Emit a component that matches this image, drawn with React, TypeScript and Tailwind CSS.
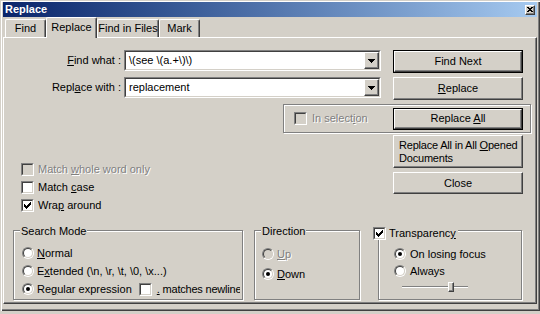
import React from "react";

const raised =
  "border border-t-white border-l-white border-r-[#404040] border-b-[#404040] shadow-[inset_-1px_-1px_0_#808080] bg-[#d4d0c8]";

function Btn({ children, def, className, left }: { children: React.ReactNode; def?: boolean; className: string; left?: boolean }) {
  const inner = (
    <div className={`h-full w-full flex items-center ${left ? "justify-start pl-[5px]" : "justify-center"} ${raised}`}>
      {children}
    </div>
  );
  return <div className={`${def ? "border border-black" : ""} ${className}`}>{inner}</div>;
}

function Combo({ value }: { value: string }) {
  return (
    <div className="w-[257px] h-[21px] flex border border-t-[#808080] border-l-[#808080] border-r-white border-b-white">
      <div className="flex-1 flex border border-t-[#404040] border-l-[#404040] border-r-[#d4d0c8] border-b-[#d4d0c8] bg-white">
        <div className="flex-1 pl-[3px] flex items-center">{value}</div>
        <div className={`w-[15px] h-full flex items-center justify-center ${raised}`}>
          <svg width="7" height="4" viewBox="0 0 7 4" shapeRendering="crispEdges">
            <path d="M0 0H7L3.5 4Z" fill="black" />
          </svg>
        </div>
      </div>
    </div>
  );
}

function Check({ checked, disabled }: { checked?: boolean; disabled?: boolean }) {
  return (
    <div className="w-[13px] h-[13px] shrink-0 border border-t-[#808080] border-l-[#808080] border-r-white border-b-white">
      <div
        className={`w-full h-full flex items-center justify-center border border-t-[#404040] border-l-[#404040] border-r-[#d4d0c8] border-b-[#d4d0c8] ${
          disabled ? "bg-[#d4d0c8]" : "bg-white"
        }`}
      >
        {checked && (
          <svg width="7" height="7" viewBox="0 0 7 7" shapeRendering="crispEdges">
            <path d="M0 2L2 4L7 -1V2L2 7L0 5Z" fill="black" />
          </svg>
        )}
      </div>
    </div>
  );
}

function Radio({ on, disabled }: { on?: boolean; disabled?: boolean }) {
  return (
    <div className="w-[12px] h-[12px] shrink-0 rounded-full border border-t-[#808080] border-l-[#808080] border-r-white border-b-white">
      <div
        className={`w-full h-full rounded-full flex items-center justify-center border border-t-[#404040] border-l-[#404040] border-r-[#d4d0c8] border-b-[#d4d0c8] ${
          disabled ? "bg-[#d4d0c8]" : "bg-white"
        }`}
      >
        {on && <div className="w-[4px] h-[4px] rounded-full bg-black" />}
      </div>
    </div>
  );
}

const U = ({ children }: { children: React.ReactNode }) => <span className="underline underline-offset-[1px]">{children}</span>;
const dis = "text-[#808080] [text-shadow:1px_1px_0_#fff]";
const etched = "relative border border-[#808080] shadow-[1px_1px_0_#fff,inset_1px_1px_0_#fff]";

function Tab({ label, w, active }: { label: string; w: string; active?: boolean }) {
  return (
    <div
      className={`${w} flex items-center justify-center rounded-t-[2px] bg-[#d4d0c8] border-t border-l border-r border-t-white border-l-white border-r-[#404040] shadow-[inset_-1px_0_0_#808080] ${
        active ? "h-[21px] -mb-[1px] relative z-10 pb-[2px]" : "h-[18px]"
      }`}
    >
      {label}
    </div>
  );
}

export default function App() {
  return (
    <div className="w-[540px] h-[314px] bg-[#d4d0c8] font-['Liberation_Sans',Arial,sans-serif] text-[11px] leading-[13px] text-black overflow-hidden">
      <div className="h-[311px] flex flex-col px-[3px] pt-[2px] shadow-[inset_1px_1px_0_#d4d0c8,inset_2px_2px_0_#fff,inset_-1px_-1px_0_#404040,inset_-2px_-2px_0_#808080]">
        {/* title bar */}
        <div className="h-[15px] flex items-center justify-between pl-[2px] pr-[2px] bg-linear-to-r from-[#0a246a] to-[#a6caf0]">
          <span className="font-bold text-white">Replace</span>
          <div className={`w-[10px] h-[10px] flex items-center justify-center ${raised}`}>
            <svg width="6" height="5" viewBox="0 0 6 5" shapeRendering="crispEdges">
              <path d="M0 0L6 5M6 0L0 5" stroke="black" strokeWidth="1.3" />
            </svg>
          </div>
        </div>

        {/* tabs */}
        <div className="h-[20px] flex items-end pl-[2px]">
          <Tab label="Find" w="w-[41px]" />
          <Tab label="Replace" w="w-[51px]" active />
          <Tab label="Find in Files" w="w-[62px]" />
          <Tab label="Mark" w="w-[41px]" />
        </div>

        {/* panel */}
        <div className="h-[267px] flex flex-col border border-t-white border-l-white border-r-[#404040] border-b-[#404040] shadow-[inset_-1px_-1px_0_#808080]">
          <div className="mt-[12px] flex items-start">
            <div className="w-[117px] h-[21px] flex items-center justify-end">
              <span>
                <U>F</U>ind what :
              </span>
            </div>
            <div className="ml-[3px]">
              <Combo value="\(see \(a.+\)\)" />
            </div>
            <Btn def className="ml-[12px] w-[130px] h-[23px]">
              Find Next
            </Btn>
          </div>

          <div className="mt-[4px] flex items-start">
            <div className="w-[117px] h-[21px] flex items-center justify-end">
              <span>
                Repl<U>a</U>ce with :
              </span>
            </div>
            <div className="ml-[3px]">
              <Combo value="replacement" />
            </div>
            <Btn className="ml-[12px] w-[130px] h-[23px]">
              <span>
                <U>R</U>eplace
              </span>
            </Btn>
          </div>

          <div className={`mt-[4px] ml-[279px] w-[248px] h-[29px] flex items-center pl-[10px] pr-[7px] ${etched}`}>
            <Check disabled />
            <span className={`ml-[5px] ${dis}`}>
              In select<U>i</U>on
            </span>
            <Btn def className="ml-auto w-[130px] h-[22px]">
              <span>
                Replace <U>A</U>ll
              </span>
            </Btn>
          </div>

          <div className="mt-[2px] flex">
            <div className="w-[389px] pl-[17px] pt-[28px] flex flex-col">
              <div className="h-[18px] flex items-start">
                <Check disabled />
                <span className={`ml-[4px] ${dis}`}>
                  Match <U>w</U>hole word only
                </span>
              </div>
              <div className="h-[18px] flex items-start">
                <Check />
                <span className="ml-[4px]">
                  Match <U>c</U>ase
                </span>
              </div>
              <div className="h-[18px] flex items-start">
                <Check checked />
                <span className="ml-[4px]">
                  Wra<U>p</U> around
                </span>
              </div>
            </div>
            <div className="flex flex-col">
              <Btn left className="w-[130px] h-[33px]">
                <span className="whitespace-nowrap tracking-[-0.2px]">
                  Replace All in All <U>O</U>pened
                  <br />
                  Documents
                </span>
              </Btn>
              <Btn className="mt-[4px] w-[130px] h-[22px]">Close</Btn>
            </div>
          </div>

          <div className="mt-[13px] flex">
            <div className={`ml-[9px] w-[230px] h-[70px] pt-[16px] pl-[8px] ${etched}`}>
              <span className="absolute -top-[6px] left-[6px] bg-[#d4d0c8] px-[1px]">Search Mode</span>
              <div className="h-[18px] flex items-start">
                <Radio />
                <span className="ml-[3px]">
                  <U>N</U>ormal
                </span>
              </div>
              <div className="h-[18px] flex items-start">
                <Radio />
                <span className="ml-[3px]">
                  E<U>x</U>tended (\n, \r, \t, \0, \x...)
                </span>
              </div>
              <div className="h-[18px] w-[218px] overflow-hidden whitespace-nowrap flex items-start">
                <Radio on />
                <span className="ml-[3px]">
                  Re<U>g</U>ular expression
                </span>
                <div className="ml-[7px]">
                  <Check />
                </div>
                <span className="ml-[5px] tracking-[-0.2px]">
                  <U>.</U> matches newline
                </span>
              </div>
            </div>

            <div className={`ml-[11px] w-[106px] h-[70px] pt-[17px] pl-[7px] ${etched}`}>
              <span className="absolute -top-[6px] left-[6px] bg-[#d4d0c8] px-[1px]">Direction</span>
              <div className="h-[20px] flex items-start">
                <Radio disabled />
                <span className={`ml-[3px] ${dis}`}>
                  <U>U</U>p
                </span>
              </div>
              <div className="h-[20px] flex items-start">
                <Radio on />
                <span className="ml-[3px]">
                  <U>D</U>own
                </span>
              </div>
            </div>

            <div className={`ml-[18px] w-[144px] h-[70px] pt-[17px] pl-[15px] ${etched}`}>
              <div className="absolute -top-[4px] -left-[6px] bg-[#d4d0c8] pr-[2px] flex items-start">
                <Check checked />
                <span className="ml-[3px]">
                  Transparenc<U>y</U>
                </span>
              </div>
              <div className="h-[17px] flex items-start">
                <Radio on />
                <span className="ml-[4px]">On losing focus</span>
              </div>
              <div className="h-[17px] flex items-start">
                <Radio />
                <span className="ml-[4px]">Always</span>
              </div>
              <div className="relative ml-[8px] w-[66px] h-[10px] flex items-center">
                <div className="w-full h-[2px] border-t border-t-[#808080] border-b border-b-white" />
                <div className={`absolute left-[46px] top-0 w-[6px] h-[10px] ${raised}`} />
              </div>
            </div>
          </div>
        </div>
      </div>
    </div>
  );
}
